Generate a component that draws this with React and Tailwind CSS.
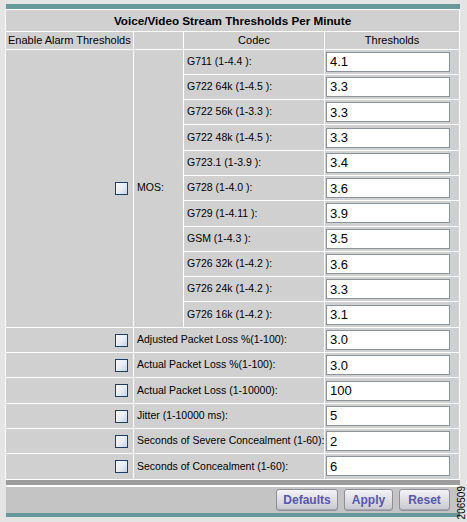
import React from "react";

const mosRows = [
  ["G711 (1-4.4 ):", "4.1"],
  ["G722 64k (1-4.5 ):", "3.3"],
  ["G722 56k (1-3.3 ):", "3.3"],
  ["G722 48k (1-4.5 ):", "3.3"],
  ["G723.1 (1-3.9 ):", "3.4"],
  ["G728 (1-4.0 ):", "3.6"],
  ["G729 (1-4.11 ):", "3.9"],
  ["GSM (1-4.3 ):", "3.5"],
  ["G726 32k (1-4.2 ):", "3.6"],
  ["G726 24k (1-4.2 ):", "3.3"],
  ["G726 16k (1-4.2 ):", "3.1"],
];

const otherRows = [
  ["Adjusted Packet Loss %(1-100):", "3.0"],
  ["Actual Packet Loss %(1-100):", "3.0"],
  ["Actual Packet Loss (1-10000):", "100"],
  ["Jitter (1-10000 ms):", "5"],
  ["Seconds of Severe Concealment (1-60):", "2"],
  ["Seconds of Concealment (1-60):", "6"],
];

function Checkbox() {
  return (
    <span className="inline-block h-[13px] w-[13px] border border-[#1c3f66] bg-gradient-to-br from-[#f7f8fa] via-[#e8eef4] to-[#c6d4e4] align-middle" />
  );
}

function ValueInput({ value }) {
  return (
    <input
      defaultValue={value}
      className="block h-[20px] w-[124px] border border-[#8a949c] bg-white px-[3px] text-[13px] text-black outline-none"
    />
  );
}

function Button({ children, width }) {
  return (
    <button
      className={`h-[22px] ${width} rounded-[3px] border border-[#8f8f9c] bg-gradient-to-b from-[#f4f4f6] to-[#c7c7cf] text-[12px] font-bold text-[#5656b0] shadow-[inset_0_-1px_0_#a8a8b4]`}
    >
      {children}
    </button>
  );
}

export default function App() {
  const cell = "bg-[#d0d0d0] p-0";
  const rowH = "h-[24.3px]";

  return (
    <div
      className="relative h-[522px] w-[467px] overflow-hidden bg-[#e4e4e4] pl-[5px] pt-[4px] text-black"
      style={{ fontFamily: '"Liberation Sans", Arial, sans-serif' }}
    >
      <div className="w-[455px]">
        <div className="ml-[1px] h-[5px] w-[454px] bg-[#669999]" />

        <table className="w-[455px] table-fixed border-separate border-spacing-[1px] bg-white text-[10.5px]">
          <colgroup>
            <col className="w-[127px]" />
            <col className="w-[49px]" />
            <col className="w-[140px]" />
            <col className="w-[134px]" />
          </colgroup>
          <tbody>
            <tr>
              <td colSpan={4} className={`${cell} h-[21px] text-center text-[11.7px] font-bold`}>
                Voice/Video Stream Thresholds Per Minute
              </td>
            </tr>
            <tr>
              <td className={`${cell} h-[16px] pl-[2px] text-[11px]`}>Enable Alarm Thresholds</td>
              <td className={cell} />
              <td className={`${cell} text-center text-[11px]`}>Codec</td>
              <td className={`${cell} text-center text-[11px]`}>Thresholds</td>
            </tr>

            {mosRows.map(([label, value], i) => (
              <tr key={label}>
                {i === 0 && (
                  <>
                    <td rowSpan={mosRows.length} className={`${cell} pr-[5px] text-right`}>
                      <Checkbox />
                    </td>
                    <td rowSpan={mosRows.length} className={`${cell} pl-[3px]`}>
                      MOS:
                    </td>
                  </>
                )}
                <td className={`${cell} ${rowH} pl-[3px]`}>{label}</td>
                <td className={`${cell} pl-[1px]`}>
                  <ValueInput value={value} />
                </td>
              </tr>
            ))}

            {otherRows.map(([label, value]) => (
              <tr key={label}>
                <td className={`${cell} ${rowH} pr-[5px] text-right`}>
                  <Checkbox />
                </td>
                <td colSpan={2} className={`${cell} whitespace-nowrap pl-[3px]`}>
                  {label}
                </td>
                <td className={`${cell} pl-[1px]`}>
                  <ValueInput value={value} />
                </td>
              </tr>
            ))}
          </tbody>
        </table>

        <div className="ml-[1px] h-[5px] w-[454px] bg-[#9c9c9c]" />
        <div className="ml-[1px] flex h-[28px] w-[454px] items-center justify-end gap-[6px] border-t-2 border-white bg-[#c4c4c4] pr-[10px]">
          <Button width="w-[62px]">Defaults</Button>
          <Button width="w-[49px]">Apply</Button>
          <Button width="w-[51px]">Reset</Button>
        </div>
        <div className="ml-[1px] h-[4px] w-[454px] bg-[#669999]" />
      </div>

      <span className="absolute bottom-[3px] right-[0px] rotate-180 text-[10px] leading-none [writing-mode:vertical-rl]">
        206509
      </span>
    </div>
  );
}
